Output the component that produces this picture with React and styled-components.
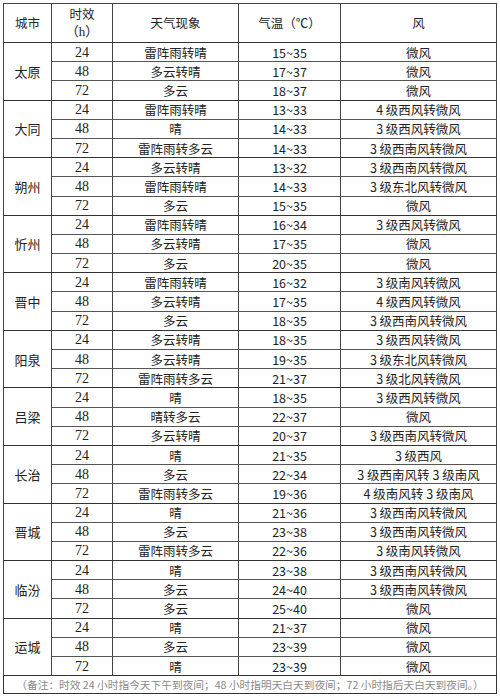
import React from "react";
import styled, { createGlobalStyle } from "styled-components";

const GlobalStyle = createGlobalStyle`
  html, body {
    margin: 0;
    padding: 0;
    background: #fff;
  }
  body {
    font-family: "Noto Sans CJK SC", "Noto Sans", sans-serif;
    color: #222;
  }
`;

const Page = styled.div`
  padding: 3px 0 0 3px;
  width: 494px;
`;

const Table = styled.table`
  width: 493px;
  border-collapse: collapse;
  table-layout: fixed;
  border: 1px solid #333;
`;

const Col = styled.col`
  width: ${(p) => p.w}px;
`;

const HeadCell = styled.th`
  height: 38px;
  padding: 0;
  font-weight: 400;
  font-size: 12.5px;
  line-height: 18px;
  text-align: center;
  border: 1px solid #444;
  border-bottom: 1.5px solid #333;
`;

const HeadLine = styled.span`
  display: block;
  line-height: 18px;
  font-family: ${(p) =>
    p.serif
      ? `"Liberation Serif", "Noto Sans CJK SC", serif`
      : `"Noto Sans CJK SC", "Noto Sans", sans-serif`};
  font-size: ${(p) => (p.serif ? "13px" : "12.5px")};
`;

const Cell = styled.td`
  height: 18.2px;
  padding: 0;
  font-size: ${(p) => (p.serif ? "14px" : "12.5px")};
  line-height: 17px;
  text-align: center;
  white-space: nowrap;
  border-left: 1px solid #444;
  border-right: 1px solid #444;
  border-bottom: ${(p) => (p.groupEnd ? "1.5px solid #333" : "1px solid #555")};
  font-family: ${(p) =>
    p.serif
      ? `"Liberation Serif", "Noto Sans CJK SC", serif`
      : `"Noto Sans CJK SC", "Noto Sans", sans-serif`};
`;

const CityCell = styled(Cell)`
  font-size: 13px;
  border-bottom: 1.5px solid #333;
`;

const Note = styled.td`
  height: 17px;
  padding: 0;
  font-size: 10.7px;
  line-height: 16px;
  color: #8a8a8a;
  text-align: center;
  white-space: nowrap;
`;

const cities = [
  { name: "太原", rows: [["24", "雷阵雨转晴", "15~35", "微风"], ["48", "多云转晴", "17~37", "微风"], ["72", "多云", "18~37", "微风"]] },
  { name: "大同", rows: [["24", "雷阵雨转晴", "13~33", "4 级西风转微风"], ["48", "晴", "14~33", "3 级西风转微风"], ["72", "雷阵雨转多云", "14~33", "3 级西南风转微风"]] },
  { name: "朔州", rows: [["24", "多云转晴", "13~32", "3 级西南风转微风"], ["48", "雷阵雨转晴", "14~33", "3 级东北风转微风"], ["72", "多云", "15~35", "微风"]] },
  { name: "忻州", rows: [["24", "雷阵雨转晴", "16~34", "3 级西风转微风"], ["48", "多云转晴", "17~35", "微风"], ["72", "多云", "20~35", "微风"]] },
  { name: "晋中", rows: [["24", "雷阵雨转晴", "16~32", "3 级南风转微风"], ["48", "多云转晴", "17~35", "4 级西风转微风"], ["72", "多云", "18~35", "3 级西南风转微风"]] },
  { name: "阳泉", rows: [["24", "多云转晴", "18~35", "3 级西风转微风"], ["48", "多云转晴", "19~35", "3 级东北风转微风"], ["72", "雷阵雨转多云", "21~37", "3 级北风转微风"]] },
  { name: "吕梁", rows: [["24", "晴", "18~35", "3 级西风转微风"], ["48", "晴转多云", "22~37", "微风"], ["72", "多云转晴", "20~37", "3 级西南风转微风"]] },
  { name: "长治", rows: [["24", "晴", "21~35", "3 级西风"], ["48", "多云", "22~34", "3 级西南风转 3 级南风"], ["72", "雷阵雨转多云", "19~36", "4 级南风转 3 级南风"]] },
  { name: "晋城", rows: [["24", "晴", "21~36", "3 级西南风转微风"], ["48", "多云", "23~38", "3 级西南风转微风"], ["72", "雷阵雨转多云", "22~36", "3 级南风转微风"]] },
  { name: "临汾", rows: [["24", "晴", "23~38", "3 级西南风转微风"], ["48", "多云", "24~40", "3 级西南风转微风"], ["72", "多云", "25~40", "微风"]] },
  { name: "运城", rows: [["24", "晴", "21~37", "微风"], ["48", "多云", "23~39", "微风"], ["72", "晴", "23~39", "微风"]] },
];

const App = () => {
  return (
    <Page>
      <GlobalStyle />
      <Table>
        <colgroup>
          <Col w={48} />
          <Col w={61} />
          <Col w={126} />
          <Col w={102} />
          <Col w={156} />
        </colgroup>
        <thead>
          <tr>
            <HeadCell>城市</HeadCell>
            <HeadCell>
              <HeadLine>时效</HeadLine>
              <HeadLine serif>（h）</HeadLine>
            </HeadCell>
            <HeadCell>天气现象</HeadCell>
            <HeadCell>气温（℃）</HeadCell>
            <HeadCell>风</HeadCell>
          </tr>
        </thead>
        <tbody>
          {cities.map((city) =>
            city.rows.map((row, i) => {
              const last = i === city.rows.length - 1;
              return (
                <tr key={city.name + row[0]}>
                  {i === 0 && (
                    <CityCell rowSpan={city.rows.length}>{city.name}</CityCell>
                  )}
                  <Cell serif groupEnd={last}>{row[0]}</Cell>
                  <Cell groupEnd={last}>{row[1]}</Cell>
                  <Cell groupEnd={last}>{row[2]}</Cell>
                  <Cell groupEnd={last}>{row[3]}</Cell>
                </tr>
              );
            })
          )}
          <tr>
            <Note colSpan={5}>
              （备注：时效 24 小时指今天下午到夜间；48 小时指明天白天到夜间；72 小时指后天白天到夜间。）
            </Note>
          </tr>
        </tbody>
      </Table>
    </Page>
  );
};

export default App;
